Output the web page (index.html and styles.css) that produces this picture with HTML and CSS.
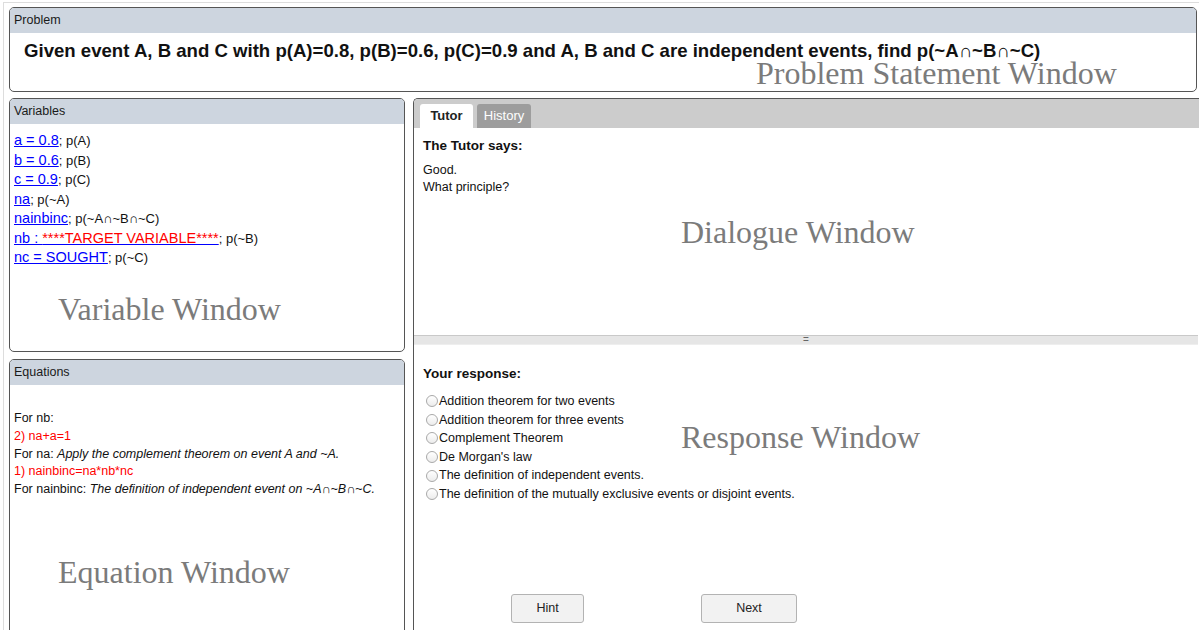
FILE: index.html
```html
<!DOCTYPE html>
<html lang="en">
<head>
<meta charset="utf-8">
<title>Tutor</title>
<link rel="stylesheet" href="styles.css">
</head>
<body>
<div class="frame">
  <section class="panel problem">
    <div class="panel-head">Problem</div>
    <div class="problem-body">
      <p class="problem-text">Given event A, B and C with p(A)=0.8, p(B)=0.6, p(C)=0.9 and A, B and C are independent events, find p(~A∩~B∩~C)</p>
    </div>
    <span class="tag tag-problem">Problem Statement Window</span>
  </section>

  <div class="workspace">
    <div class="left-col">
      <section class="panel vars">
        <div class="panel-head">Variables</div>
        <ul class="var-list">
          <li><a href="#">a = 0.8</a>; p(A)</li>
          <li><a href="#">b = 0.6</a>; p(B)</li>
          <li><a href="#">c = 0.9</a>; p(C)</li>
          <li><a href="#">na</a>; p(~A)</li>
          <li><a href="#">nainbinc</a>; p(~A∩~B∩~C)</li>
          <li><a href="#">nb : <span class="target">****TARGET VARIABLE****</span></a>; p(~B)</li>
          <li><a href="#">nc = SOUGHT</a>; p(~C)</li>
        </ul>
        <span class="tag tag-vars">Variable Window</span>
      </section>

      <section class="panel eqs">
        <div class="panel-head">Equations</div>
        <div class="eq-list">
          <div>For nb:</div>
          <div class="eq">2) na+a=1</div>
          <div>For na: <em>Apply the complement theorem on event A and ~A.</em></div>
          <div class="eq">1) nainbinc=na*nb*nc</div>
          <div>For nainbinc: <em>The definition of independent event on ~A∩~B∩~C.</em></div>
        </div>
        <span class="tag tag-eqs">Equation Window</span>
      </section>
    </div>

    <section class="panel tutor">
      <div class="tabs">
        <span class="tab tab-active">Tutor</span>
        <span class="tab">History</span>
      </div>
      <div class="dialogue">
        <div class="says">The Tutor says:</div>
        <div class="message">Good.<br>What principle?</div>
        <span class="tag tag-dialogue">Dialogue Window</span>
      </div>
      <div class="splitter">=</div>
      <div class="response">
        <div class="says">Your response:</div>
        <ul class="choices">
          <li><span class="radio"></span>Addition theorem for two events</li>
          <li><span class="radio"></span>Addition theorem for three events</li>
          <li><span class="radio"></span>Complement Theorem</li>
          <li><span class="radio"></span>De Morgan's law</li>
          <li><span class="radio"></span>The definition of independent events.</li>
          <li><span class="radio"></span>The definition of the mutually exclusive events or disjoint events.</li>
        </ul>
        <div class="actions">
          <button class="btn btn-hint" type="button">Hint</button>
          <button class="btn btn-next" type="button">Next</button>
        </div>
        <span class="tag tag-response">Response Window</span>
      </div>
    </section>
  </div>
</div>
</body>
</html>
```

FILE: styles.css
```css
* {
  box-sizing: border-box;
}

html, body {
  margin: 0;
  padding: 0;
  width: 1199px;
  height: 630px;
  overflow: hidden;
  background: #ffffff;
  font-family: "Liberation Sans", Arial, sans-serif;
  font-size: 12.5px;
  color: #111111;
}

.frame {
  margin: 2px 0 0 3px;
  border-top: 1px solid #dddddd;
  border-left: 1px solid #dddddd;
  padding: 4px 0 0 5px;
  height: 640px;
}

/* shared panel chrome */
.panel {
  position: relative;
  border: 1px solid #555555;
  border-radius: 5px;
  background: #ffffff;
  overflow: hidden;
}

.panel-head {
  height: 25px;
  line-height: 25px;
  padding-left: 4px;
  background: #cdd5df;
  color: #1a1a1a;
  font-size: 12.5px;
}

/* annotation labels over each window */
.tag {
  position: absolute;
  font-family: "Liberation Serif", "Times New Roman", serif;
  font-size: 32px;
  line-height: 32px;
  color: #7b7b7b;
  white-space: nowrap;
}

/* problem statement */
.problem {
  width: 1188px;
  height: 85px;
}

.problem-body {
  padding: 9px 0 0 14px;
}

.problem-text {
  margin: 0;
  font-size: 18.6px;
  font-weight: bold;
  line-height: 18px;
  color: #111111;
}

.tag-problem {
  left: 746px;
  top: 52px;
  line-height: 26px;
}

/* two-column work area */
.workspace {
  display: grid;
  grid-template-columns: 396px 800px;
  column-gap: 8px;
  margin-top: 6px;
  height: 545px;
}

.left-col {
  display: flex;
  flex-direction: column;
  gap: 7px;
}

.vars {
  height: 254px;
}

.var-list {
  list-style: none;
  margin: 0;
  padding: 7px 0 0 4px;
  font-size: 13px;
}

.var-list li {
  height: 19.5px;
  line-height: 19.5px;
  white-space: nowrap;
}

.var-list a {
  color: #0000ff;
  font-size: 14.5px;
  line-height: 19.5px;
  text-decoration: underline;
}

.var-list .target {
  color: #ff0000;
}

.tag-vars {
  left: 48px;
  top: 194px;
}

.eqs {
  flex: 1;
}

.eq-list {
  padding: 25px 0 0 4px;
  line-height: 17.8px;
}

.eq-list .eq {
  color: #ff0000;
}

.tag-eqs {
  left: 48px;
  top: 196px;
}

/* tutor window */
.tutor {
  border-right: none;
  border-radius: 5px 0 0 0;
  display: flex;
  flex-direction: column;
}

.tabs {
  display: flex;
  gap: 4px;
  height: 29px;
  padding: 5px 0 0 6px;
  background: #cccccc;
}

.tab {
  height: 24px;
  line-height: 24px;
  border-radius: 3px 3px 0 0;
  background: #9d9d9d;
  color: #ffffff;
  font-size: 13px;
  text-align: center;
}

.tab-active {
  width: 53px;
  background: #ffffff;
  color: #222222;
  font-weight: bold;
}

.tab:not(.tab-active) {
  width: 54px;
}

.dialogue {
  position: relative;
  height: 207px;
  padding: 9px 0 0 9px;
}

.says {
  font-size: 13.5px;
  font-weight: bold;
  line-height: 18px;
  color: #111111;
}

.message {
  margin-top: 7px;
  line-height: 17px;
}

.tag-dialogue {
  left: 267px;
  top: 88px;
}

.splitter {
  height: 10px;
  border-top: 1px solid #c9c9c9;
  border-bottom: 1px solid #eeeeee;
  background: #e6e6e6;
  color: #666666;
  font-size: 10px;
  line-height: 8px;
  text-align: center;
  width: 784px;
}

.response {
  position: relative;
  flex: 1;
  padding: 20px 0 0 9px;
}

.choices {
  list-style: none;
  margin: 9px 0 0;
  padding: 0;
  line-height: 18.6px;
}

.choices li {
  display: flex;
  align-items: center;
}

.radio {
  width: 12px;
  height: 12px;
  margin: 0 1px 0 3px;
  border: 1px solid #a9a9a9;
  border-radius: 50%;
  background: linear-gradient(#ffffff, #ececec);
}

.actions {
  display: flex;
  gap: 117px;
  margin: 90px 0 0 88px;
}

.btn {
  height: 29px;
  border: 1px solid #b3b3b3;
  border-radius: 3px;
  background: #f2f2f2;
  color: #222222;
  font-family: "Liberation Sans", Arial, sans-serif;
  font-size: 12.5px;
  padding: 0;
}

.btn-hint {
  width: 73px;
}

.btn-next {
  width: 96px;
}

.tag-response {
  left: 267px;
  top: 76px;
}
```
